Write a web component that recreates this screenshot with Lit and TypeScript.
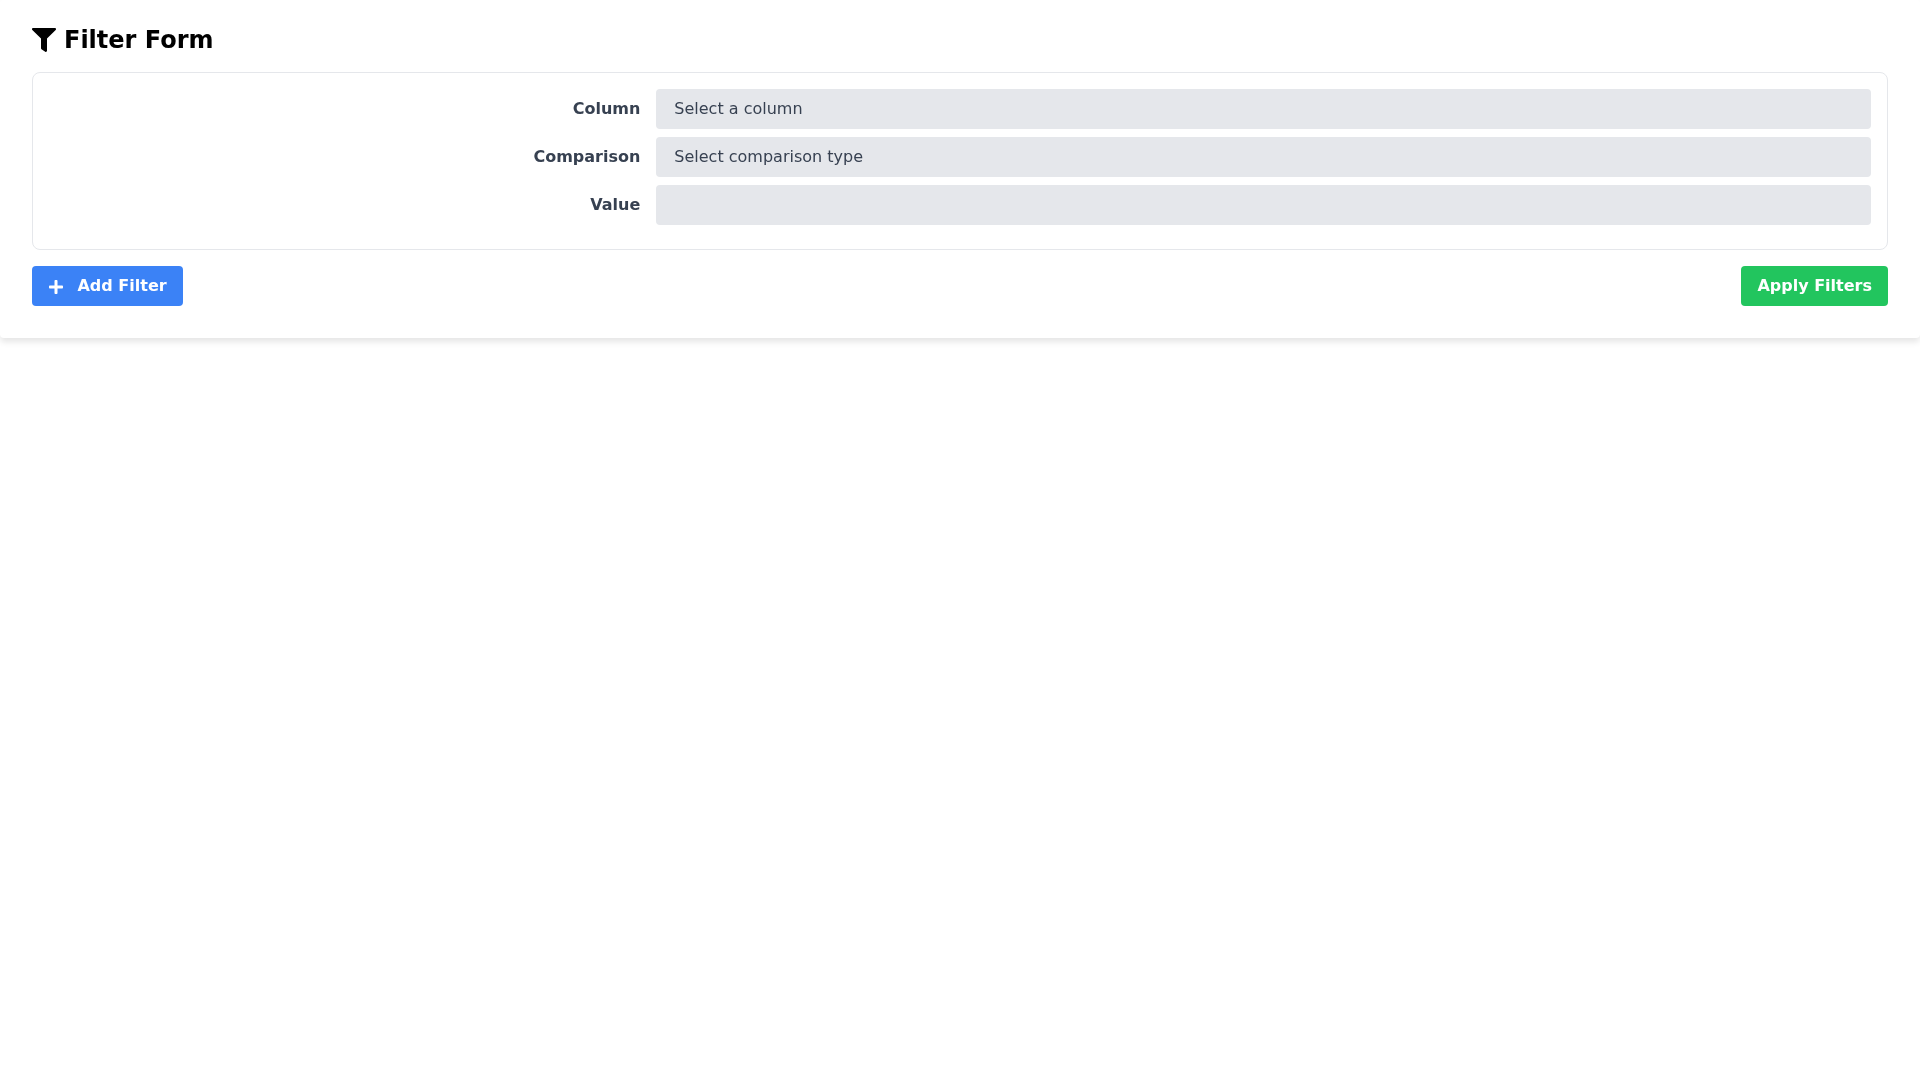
import { LitElement, html, css } from "lit";
import { customElement } from "lit/decorators.js";

@customElement("app-root")
export class AppRoot extends LitElement {
  static styles = css`
    :host {
      display: block;
      font-family: "DejaVu Sans", sans-serif;
      font-size: 16px;
      line-height: 24px;
      padding-bottom: 24px;
    }
    * { box-sizing: border-box; }
    .outer {
      background: #fff;
      padding: 24px 32px 32px;
      border-radius: 4px;
      box-shadow: 0 4px 6px rgba(0,0,0,.1);
      will-change: transform;
    }
    h1 {
      margin: 0 0 16px;
      display: flex;
      align-items: center;
      gap: 8px;
      font-size: 24px;
      line-height: 32px;
      font-weight: 700;
      color: #000;
    }
    h1 svg { width: 24px; height: 24px; display: block; fill: currentColor; }
    .panel {
      border: 1px solid #e5e7eb;
      border-radius: 8px;
      padding: 16px 16px 24px;
      display: flex;
      flex-direction: column;
      gap: 8px;
      margin-bottom: 16px;
    }
    .row { display: flex; align-items: center; }
    label {
      width: 33.3333%;
      padding-right: 16px;
      text-align: right;
      font-weight: 700;
      color: #374151;
    }
    .field {
      width: 66.6667%;
      height: 40px;
      padding: 8px 18px;
      background: #e5e7eb;
      border-radius: 4px;
      color: #374151;
    }
    .actions { display: flex; justify-content: space-between; }
    button {
      display: flex;
      align-items: center;
      height: 40px;
      padding: 0 16px;
      border: 0;
      border-radius: 4px;
      color: #fff;
      font: 700 16px/24px "DejaVu Sans", sans-serif;
    }
    button svg { width: 14px; height: 16px; fill: currentColor; margin: 2px 14.8px 0 0.7px; display: block; }
    .add { background: #3b82f6; padding-right: 16.5px; }
    .apply { background: #22c55e; }
  `;

  render() {
    return html`
      <div class="outer">
        <h1>
          <svg viewBox="0 0 512 512"><path d="M487.976 0H24.028C2.71 0-8.047 25.866 7.058 40.971L192 225.941V432c0 7.831 3.821 15.17 10.237 19.662l80 55.98C298.02 518.69 320 507.493 320 487.98V225.941l184.947-184.97C520.021 25.896 509.338 0 487.976 0z"/></svg>
          Filter Form
        </h1>
        <div class="panel">
          <div class="row"><label>Column</label><div class="field">Select a column</div></div>
          <div class="row"><label>Comparison</label><div class="field">Select comparison type</div></div>
          <div class="row"><label>Value</label><div class="field"></div></div>
        </div>
        <div class="actions">
          <button class="add">
            <svg viewBox="0 0 448 512"><path d="M416 208H272V64c0-17.67-14.33-32-32-32h-32c-17.67 0-32 14.33-32 32v144H32c-17.67 0-32 14.33-32 32v32c0 17.67 14.33 32 32 32h144v144c0 17.67 14.33 32 32 32h32c17.67 0 32-14.33 32-32V304h144c17.67 0 32-14.33 32-32v-32c0-17.67-14.33-32-32-32z"/></svg>
            Add Filter
          </button>
          <button class="apply">Apply Filters</button>
        </div>
      </div>
    `;
  }
}
